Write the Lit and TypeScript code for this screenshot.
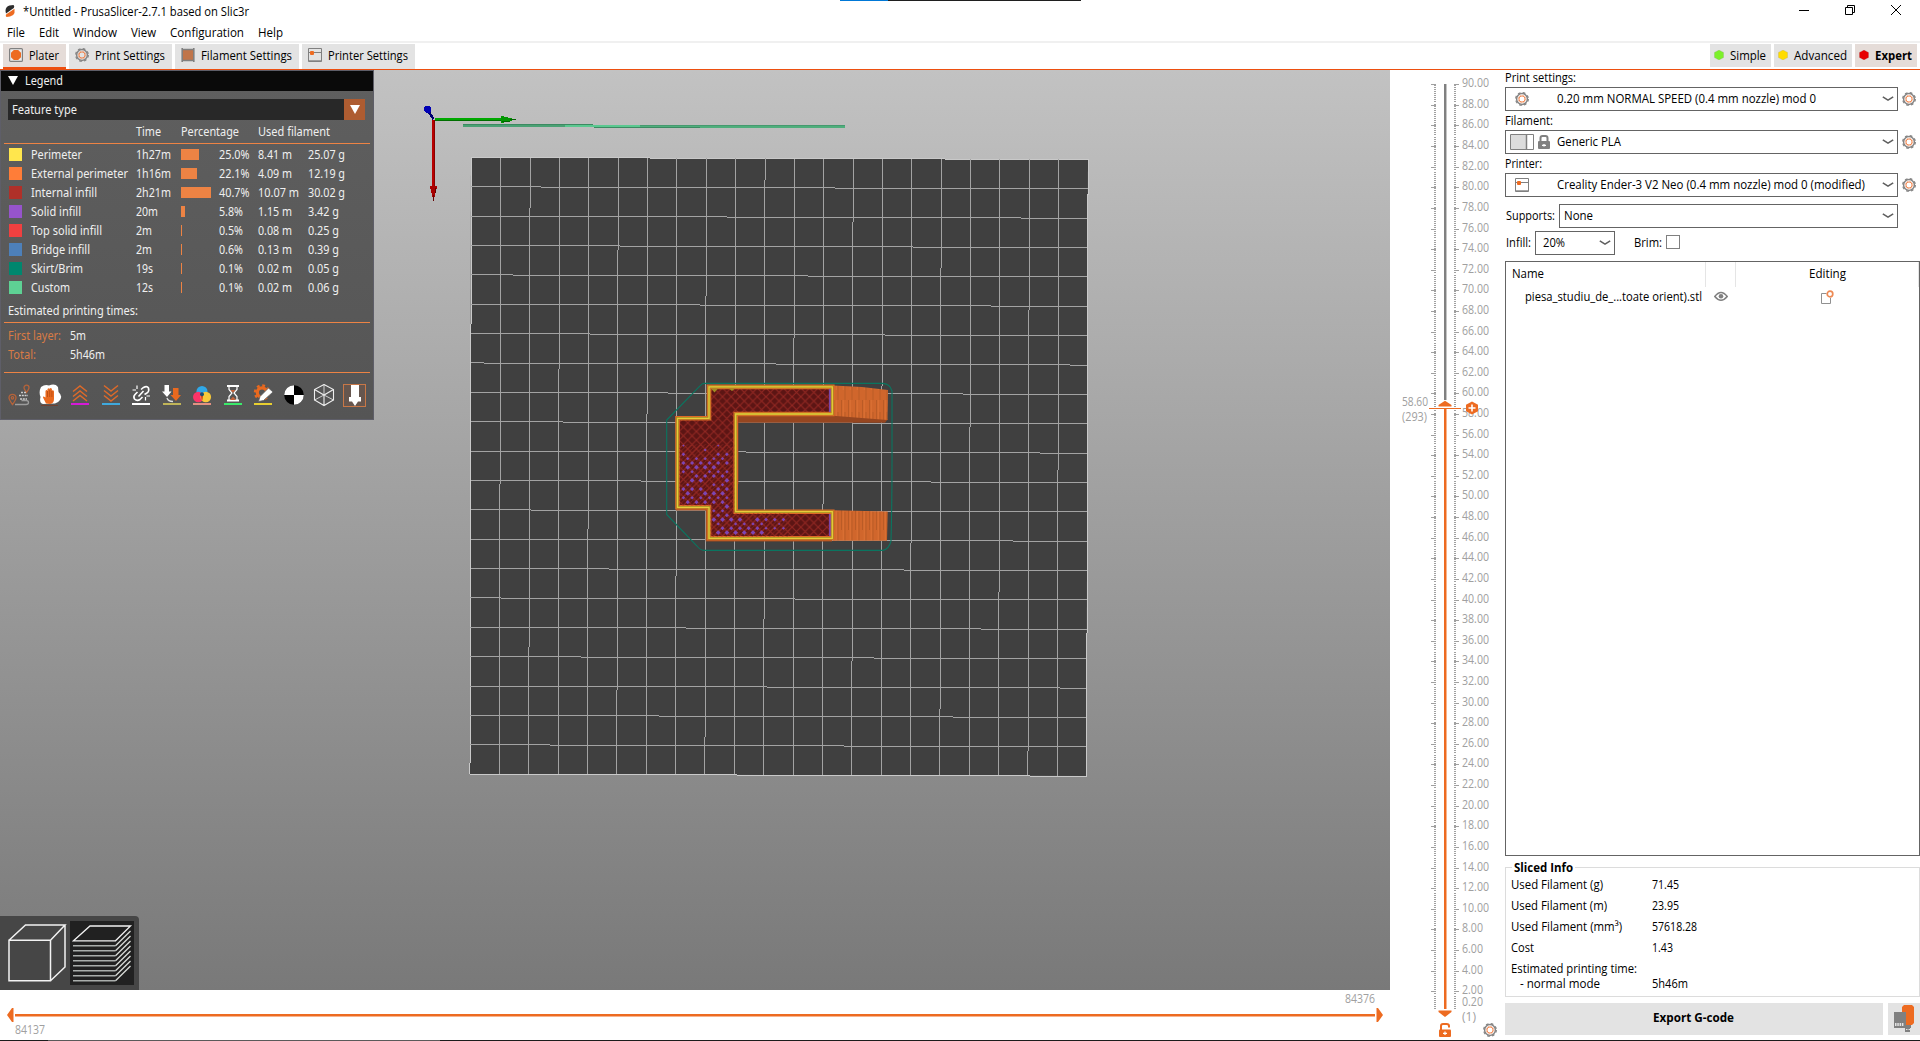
import { LitElement, html, svg, css } from 'lit';
import { customElement } from 'lit/decorators.js';

/* One line of text set to an exact advance width. */
const t = (text: string, w: number, cls = '') => html`<svg class="t ${cls}" width=${w} height="16">
  <text x="0" y="12" textLength=${w} lengthAdjust="spacingAndGlyphs">${text}</text></svg>`;

const textCss = css`
  .t { display: block; flex: none; overflow: visible; fill: #000; font: 12px 'Open Sans', 'Noto Sans', sans-serif; }
  .t.b { font-weight: 700; }
  .t.g { fill: #a0a0a0; }
  .t.l { fill: #efefef; font-family: 'Noto Sans', sans-serif; }
  .t.o { fill: #d97b45; font-family: 'Noto Sans', sans-serif; }
  svg { display: block; flex: none; }
`;

const cogRings = (cx: number, cy: number) => svg`<g fill="none">
  <circle cx=${cx} cy=${cy} r="5.4" stroke="#858585" stroke-width="1.5" />
  <circle cx=${cx} cy=${cy} r="6.3" stroke="#858585" stroke-width="1.3" stroke-dasharray="2.7 2.25" />
  <circle cx=${cx} cy=${cy} r="3.1" stroke="#f0824a" stroke-width="1" />
  <circle cx=${cx} cy=${cy} r="3.8" stroke="#f0824a" stroke-width=".5" stroke-dasharray="1.5 1.49" /></g>`;
const cog = html`<svg width="14" height="14" viewBox="0 0 14 14">${cogRings(7, 7)}</svg>`;
const printer = html`<svg width="14" height="14" viewBox="0 0 14 14">
  <path d="M.5 .5H13.5V13.5H.5ZM.5 4.5H13.5M.5 12.8H13.5" fill="none" stroke="#808080" />
  <rect x="2" y="3" width="4" height="4" rx="1" fill="#ed6b21" /></svg>`;
const plater = html`<svg width="14" height="14" viewBox="0 0 14 14">
  <rect x=".6" y=".6" width="12.8" height="12.8" rx="1" fill="#ececec" stroke="#808080" stroke-width="1.2" />
  <path d="M4.8 2H9.2L12 4.8V9.2L9.2 12H4.8L2 9.2V4.8Z" fill="#ed6b21" /></svg>`;
const spool = html`<svg width="14" height="14" viewBox="0 0 14 14">
  <rect x="2" y="1.5" width="10" height="11" fill="#c0754a" />
  <path d="M1.2 0V14M12.8 0V14M2 1.5H12M2 12.5H12" stroke="#808080" stroke-width="1.6" /></svg>`;
const hex = (c: string) => html`<svg width="10" height="10" viewBox="0 0 10 10">
  <path d="M5 0L9.6 2.4V7.6L5 10L.4 7.6V2.4Z" fill=${c} stroke="#8a8a8a" stroke-opacity=".35" stroke-width=".6" /></svg>`;
const chevron = html`<svg width="12" height="6" viewBox="0 0 12 6"><path d="M.8 .8L6 4.2L11.2 .8" fill="none" stroke="#606060" stroke-width="1.5" /></svg>`;

@customElement('title-bar')
class TitleBar extends LitElement {
  static styles = [textCss, css`
    :host { display: block; height: 43px; background: #fff; position: relative; }
    .title { display: flex; height: 22px; align-items: flex-start; padding: 4px 0 0 5px; box-sizing: border-box; }
    .logo { margin: 1px 8px 0 0; }
    .win { display: flex; margin: 1px 19px 0 auto; gap: 36px; }
    .menu { display: flex; height: 19px; padding: 3px 0 0 7px; gap: 14px; box-sizing: border-box; }
    .rule { height: 2px; background: #f0f0f0; }
    .strip { position: absolute; left: 840px; top: 0; width: 241px; height: 1px; background: linear-gradient(90deg, #0078d7 48px, #1f1f1f 48px); }
  `];
  render() {
    return html`<div class="title">
      <svg class="logo" width="10" height="12" viewBox="0 0 10 12"><path d="M.5 6Q.5 1.500 4.500 .5L8.500 0Q9.800 1 8.800 3L1 8.500Z" fill="#2c2c2c" />
        <path d="M9.500 3.800V8Q8.500 11 5 11.6L1.5 12Q.2 11 1 9.500Z" fill="#ed6b21" /></svg>
      ${t('*Untitled - PrusaSlicer-2.7.1 based on Slic3r', 226)}
      <div class="win">
        <svg width="10" height="12"><path d="M0 5.5H10" stroke="#000" /></svg>
        <svg width="10" height="12"><path d="M.5 2.5H7.5V9.5H.5ZM2.5 2.5V.5H9.5V7.5H7.5" fill="none" stroke="#000" /></svg>
        <svg width="10" height="12"><path d="M0 0L10 10M10 0L0 10" stroke="#000" /></svg>
      </div></div>
      <div class="menu">${t('File', 18)}${t('Edit', 20)}${t('Window', 44)}${t('View', 25)}${t('Configuration', 74)}${t('Help', 25)}</div>
      <div class="rule"></div><div class="strip"></div>`;
  }
}

@customElement('tab-bar')
class TabBar extends LitElement {
  static styles = [textCss, css`
    :host { display: flex; height: 27px; background: #fff; border-bottom: 1px solid #ed4f10; box-sizing: border-box; padding: 1px 3px 0; gap: 3px; }
    .tab { display: flex; height: 25px; background: #e3e3e3; box-sizing: border-box; padding: 4px 7px 0 6px; }
    .tab > svg:first-child { margin-right: 6px; }
    .tab.on { background: #e5dcd8; border-bottom: 2px solid #ed4f10; }
    .mode { display: flex; height: 23px; background: #e3e3e3; box-sizing: border-box; padding: 4px 5px 0 4px; }
    .mode > svg:first-child { margin: 2px 6px 0 0; }
    .mode.on { background: #e5dcd8; }
    .sp { flex: 1; }
  `];
  render() {
    return html`<div class="tab on">${plater}${t('Plater', 30)}</div>
      <div class="tab">${cog}${t('Print Settings', 70)}</div>
      <div class="tab">${spool}${t('Filament Settings', 91)}</div>
      <div class="tab">${printer}${t('Printer Settings', 80)}</div>
      <div class="sp"></div>
      <div class="mode">${hex('#7cf02a')}${t('Simple', 36)}</div>
      <div class="mode">${hex('#ffdc00')}${t('Advanced', 53)}</div>
      <div class="mode on">${hex('#e70000')}${t('Expert', 37, 'b')}</div>`;
  }
}

type Row = [string, string, number, string, number, number, string, string, number];
const rows: Row[] = [
  ['#ffe64d', 'Perimeter', 51, '1h27m', 35, 18, '25.0%', '8.41 m', 25.07],
  ['#ff7d38', 'External perimeter', 97, '1h16m', 35, 16, '22.1%', '4.09 m', 12.19],
  ['#b03029', 'Internal infill', 66, '2h21m', 35, 30, '40.7%', '10.07 m', 30.02],
  ['#9654cc', 'Solid infill', 50, '20m', 22, 4, '5.8%', '1.15 m', 3.42],
  ['#f04040', 'Top solid infill', 71, '2m', 16, 1, '0.5%', '0.08 m', 0.25],
  ['#4d80ba', 'Bridge infill', 59, '2m', 16, 1, '0.6%', '0.13 m', 0.39],
  ['#00876e', 'Skirt/Brim', 52, '19s', 17, 1, '0.1%', '0.02 m', 0.05],
  ['#5ed194', 'Custom', 39, '12s', 17, 1, '0.1%', '0.02 m', 0.06],
];

/* Legend toolbar glyphs, each drawn in a 24 x 24 box. */
const bar = (c: string) => svg`<rect x="3" y="19" width="18" height="2" fill=${c} />`;
const tools = [
  svg`<g fill="none" stroke="#b5633a" stroke-width="1.3"><path d="M5.5 20.5C3 17 2 15.500 2 13.800A3.500 3.500 0 0 1 9 13.800C9 15.500 8 17 5.500 20.500Z" /><circle cx="5.500" cy="13.800" r="1.200" /><path d="M19.500 8.500C17.500 5.500 17 4.700 17 3.700A2.500 2.500 0 0 1 22 3.700C22 4.700 21.500 5.500 19.500 8.500Z" /><path d="M8 20.500H19Q21.500 20.500 21.500 18.500T19 16.500H14.500" stroke="#9c9c9c" /><path d="M14 8.500H20" stroke="#c8c8c8" stroke-dasharray="2 1" /><path d="M12 11.500H21M13 15H20" stroke="#d0d0d0" stroke-width="1.600" stroke-dasharray="2 .8" /></g>`,
  svg`<path d="M3 3Q7 0 11 1.500Q17 -1 20 3L20.500 8Q25 12 22 16Q20 19 17 19.500L5 20Q1 19 2.500 13Q.5 8 3 3Z" fill="#fff" /><path d="M8 19.500L5 13.500Q4.500 11.500 7.500 13.500V7Q8.500 5 9.500 7V5Q10.700 3.500 11.700 5V4.500Q12.900 3.300 13.900 5V6.500Q15.500 5.500 16 7.500V15Q16 19.500 12 20Z" fill="#e9691f" /><path d="M9.500 7V13M11.700 6V13M13.900 7V13" stroke="#a33e0c" stroke-width=".6" /><path d="M3 21.500H20" stroke="#6e4030" />`,
  svg`<path d="M5 7.500L12 2L19 7.500M5 12.500L12 7L19 12.500M5 17L12 11.500L19 17" fill="none" stroke="#dd6a2a" stroke-width="1.500" />${bar('#d61ad6')}`,
  svg`<path d="M5 1.500L12 7L19 1.500M5 6.500L12 12L19 6.500M5 11.500L12 17L19 11.500" fill="none" stroke="#dd6a2a" stroke-width="1.500" />${bar('#3fa9dd')}`,
  svg`<g fill="none" stroke="#fff" stroke-width="1.600"><path d="M12 5.500L14.500 3.500Q18 1.500 19.500 4Q20.500 7 18 9L15.500 10.500" /><path d="M8.500 8L6 10.500Q4 12.500 5.500 15Q8 17.500 11 15.500L13.500 13" /><path d="M9.500 12.500L14.500 7" /><path d="M8 1.500V5M3.500 6H7M16.500 13V16.500M17.500 12H21" stroke-width="1.200" /></g>${bar('#fff')}`,
  svg`<path d="M4.500 1H9V7.500H11.500L7 13L2 7.500H4.500Z" fill="#fff" /><path d="M13 4H18.500V11H21L16 17L10.500 11H13Z" fill="#e9691f" /><path d="M7 14Q8 17.500 13 17.500" fill="none" stroke="#ddd" stroke-width="1.300" />${bar('#c0b458')}`,
  svg`<circle cx="12" cy="7.500" r="5.500" fill="#30a8e8" /><circle cx="8.300" cy="13" r="5.300" fill="#fb3468" /><circle cx="15.800" cy="13" r="5.300" fill="#f7c93a" /><path d="M12 9Q14 12 12 17Q10 12 12 9Z" fill="#d64a1c" /><circle cx="12" cy="10.300" r="2" fill="#1c4f74" />${bar('#e29182')}`,
  svg`<path d="M6 2H18M6 16.500H18" stroke="#fff" stroke-width="2" /><path d="M8 2.500V5.500L11 9L8 12.500V16M16 2.500V5.500L13 9L16 12.500V16" fill="none" stroke="#fff" stroke-width="1.200" /><path d="M9.500 6H14.500L12 8.700ZM9 16L12 12.500L15 16Z" fill="#c4633a" />${bar('#3bea6b')}`,
  svg`<circle cx="11" cy="8.500" r="4.700" fill="none" stroke="#e9691f" stroke-width="3.200" /><circle cx="11" cy="8.500" r="7" fill="none" stroke="#e9691f" stroke-width="2.400" stroke-dasharray="2.800 2.700" /><path d="M7.500 17.500L9 12.500L17.500 4L22 8L12.500 16.500Z" fill="#fff" stroke="#5a5a5a" stroke-width=".8" />${bar('#e8cf30')}`,
  svg`<circle cx="12" cy="11" r="9.800" fill="#000" /><path d="M12 11V1.200A9.800 9.800 0 0 0 2.200 11ZM12 11V20.800A9.800 9.800 0 0 0 21.800 11Z" fill="#fff" />`,
  svg`<g fill="none" stroke="#eee" stroke-width="1.100"><path d="M12 .5L21.500 5.500V16L12 21.500L2.500 16V5.500ZM2.500 5.500L12 11L21.500 5.500M12 11V21.500" /><path d="M12 .5V11L2.500 16M12 11L21.500 16" stroke-width=".8" /></g>`,
  svg`<rect x=".5" y=".5" width="22" height="22" fill="#66564e" stroke="#c87747" /><path d="M8 1H16V13H18V17.500H15L12 22L9 17.500H6V13H8Z" fill="#fff" />`,
];

@customElement('legend-panel')
class LegendPanel extends LitElement {
  static styles = [textCss, css`
    :host { display: block; width: 374px; height: 350px; box-sizing: border-box; border: 1px solid #5e5e68; background: linear-gradient(#5f5f5f, #555); overflow: hidden; }
    .head { display: flex; height: 20px; background: #0a0a0a; padding: 2px 0 0 7px; box-sizing: border-box; }
    .head > svg:first-child { margin: 3px 7px 0 0; }
    .combo { display: flex; justify-content: space-between; height: 21px; margin: 8px 8px 0 7px; background: #282828; }
    .combo .t { margin: 3px 0 0 4px; }
    .drop { display: flex; align-items: center; justify-content: center; width: 21px; background: #ae5c31; }
    .cols { display: grid; grid-template-columns: 45px 77px 1fr; padding: 4px 0 0 135px; height: 23px; box-sizing: border-box; }
    .line { height: 1px; margin: 0 3px; background: #ed8344; }
    .rows { padding-top: 1px; }
    .row { display: grid; grid-template-columns: 22px 105px 45px 38px 39px 50px 1fr; height: 19px; padding: 2px 0 0 8px; box-sizing: border-box; }
    .sw { width: 13px; height: 13px; margin-top: 1px; }
    .bar { height: 11px; margin-top: 2px; background: #ed8344; }
    .est { padding: 6px 0 3px 7px; }
    .times { display: grid; grid-template-columns: 62px 1fr; row-gap: 3px; padding: 5px 0 9px 7px; }
    .tools { display: grid; grid-template-columns: repeat(12, 30.5px); padding: 11px 0 0 6px; }
  `];
  render() {
    return html`<div class="head"><svg width="10" height="9"><path d="M0 0H10L5 9Z" fill="#fff" /></svg>${t('Legend', 38, 'l')}</div>
      <div class="combo">${t('Feature type', 65, 'l')}<span class="drop"><svg width="10" height="9"><path d="M0 0H10L5 9Z" fill="#fff" /></svg></span></div>
      <div class="cols">${t('Time', 25, 'l')}${t('Percentage', 58, 'l')}${t('Used filament', 72, 'l')}</div>
      <div class="line"></div>
      <div class="rows">${rows.map(r => html`<div class="row">
        <div class="sw" style="background:${r[0]}"></div>${t(r[1], r[2], 'l')}${t(r[3], r[4], 'l')}
        <div class="bar" style="width:${r[5]}px"></div>${t(r[6], r[6].length > 4 ? 30.5 : 24, 'l')}
        ${t(r[7], r[7].length > 6 ? 41 : 34, 'l')}${t(`${r[8].toFixed(2)} g`, r[8] >= 10 ? 37 : 31, 'l')}</div>`)}</div>
      <div class="est">${t('Estimated printing times:', 130, 'l')}</div>
      <div class="line"></div>
      <div class="times">${t('First layer:', 53, 'o')}${t('5m', 16, 'l')}${t('Total:', 28, 'o')}${t('5h46m', 35, 'l')}</div>
      <div class="line"></div>
      <div class="tools">${tools.map(g => html`<svg width="24" height="24" viewBox="0 0 24 24">${g}</svg>`)}</div>`;
  }
}

@customElement('bed-view')
class BedView extends LitElement {
  static styles = [textCss, css`
    :host { display: block; position: relative; width: 1390px; height: 920px; background: linear-gradient(#c2c2c2, #797979); }
    .legend { position: absolute; left: 0; top: 0; }
    .toggle { position: absolute; left: 0; bottom: 0; width: 139px; height: 74px; box-sizing: border-box; display: flex; padding: 5px; background: #464646; border-radius: 0 4px 0 0; }
    .on { background: #212121; }
  `];
  bed() {
    const n = 21, out = [];
    for (let i = 0; i <= n; i++) {
      const f = i / n, e = i === 0 || i === n;
      const x = 471.4 + 616.7 * f, y = 157.4 + 616.7 * f;
      const c = e ? '#c9c9c9' : '#a3a3a3';
      out.push(svg`<path d="M${x} ${157.5 + 2 * f}L${x - 1.4} ${774 + 2 * f}M${471.5 - 1.4 * f} ${y}L${1088 - 1.4 * f} ${y + 2.1}" stroke=${c} />`);
    }
    return out;
  }
  /* Solid infill showing through the cells of the sparse infill. */
  purple() {
    const out = [];
    for (let j = 0; j < 21; j++) for (let i = 0; i < 14; i++) {
      const x = 683.4 + i * 8.7 + (j % 2) * 4.35, y = 445.6 + j * 4.35;
      if (x > 731 && (y < 516 || x > 787)) continue;
      if ((y > 503 && x < 713) || y > 534) continue;
      const k = (i * 7 + j * 5) % 9;
      const top = y < 456, band = y > 477 && y < 486;
      if (k > (top ? 2 : band ? 3 : x > 760 ? 5 : 7)) continue;
      const s = (top || x > 765 ? 1.2 : 1.7) + ((i * 3 + j) % 3) * 0.35;
      out.push(svg`<path d="M${x} ${y - s}l${s} ${s}l${-s} ${s}l${-s} ${-s}Z" />`);
    }
    return out;
  }
  render() {
    const body = 'M709 386.900H832.300V414H735.700V511.700H832.300V538.300H709V507.300H677.500V418.300H709Z';
    return html`<svg width="1390" height="920" viewBox="0 70 1390 920">
      <defs>
        <pattern id="fill" width="8.700" height="8.700" patternUnits="userSpaceOnUse" x="679" y="388"><rect width="9" height="9" fill="#5c1514" />
          <path d="M-1 -1L10 10M-1 9.700L9.700 -1" stroke="#922722" stroke-width="1.100" /></pattern>
        <pattern id="dense" width="4.350" height="4.350" patternUnits="userSpaceOnUse" x="679" y="388"><path d="M-1 5.350L5.350 -1" stroke="#982a24" stroke-width=".9" /></pattern>
        <pattern id="ribs" width="7" height="50" patternUnits="userSpaceOnUse"><rect width="7" height="50" fill="#d0662c" /><path d="M1.500 0V30M5 12V50" stroke="#b85a26" stroke-width=".9" /><path d="M3.300 0V40" stroke="#dc7034" stroke-width=".9" /></pattern>
      </defs>
      <path d="M471 157.500L1088 159.500L1086.500 776L470 774Z" fill="#404040" />
      <g shape-rendering="crispEdges" fill="none">${this.bed()}</g>
      <g shape-rendering="crispEdges">
        <path d="M463 124H593V127H463Z" fill="#4aa174" /><path d="M594 125H845V128H594Z" fill="#4fae7c" />
        <path d="M565 125H640V127H565Z" fill="#5bc890" /><path d="M463 124.500H593M594 127.500H700" stroke="#3c8a62" /><path d="M640 125.500H845" stroke="#469a6f" />
        <path d="M435 118H502V121H435Z" fill="#00a800" /><path d="M435 120.500H502" stroke="#006e00" />
        <path d="M501 116H504V117H508V118H512V121H508V122H504V123H501Z" fill="#009600" /><path d="M502 121.500H510M510 119.500H516" stroke="#006400" />
        <path d="M432 120H435V187H432Z" fill="#b80000" /><path d="M434.500 120V187" stroke="#800" />
        <path d="M430 186H437V189H436V193H435V197H432V193H431V189H430Z" fill="#a80000" /><path d="M435.500 188V193M433.500 195V201" stroke="#600" />
        <path d="M433.500 119L429 112" stroke="#000070" stroke-width="2.600" /><path d="M425 106H430L431 108V111L429 113H426L424 110V107Z" fill="#0000b4" />
      </g>
      <path d="M704 383.400H883Q890 384 892 391V462Q892 505 891 541Q889 549 883 550.400H704Q700 550 697 546L666.700 514.500V420L700 386Q702 383.400 704 383.400Z" fill="none" stroke="#0a7560" stroke-width="1.100" />
      <path d="M737 415H833L888 419L885 422.700H737Z" fill="#964620" />
      <path d="M833 385.500L862 387L888 390L887.500 420L833 415.700Z" fill="url(#ribs)" />
      <path d="M833 510.300L887.700 511.500L887 540.700H833Z" fill="url(#ribs)" />
      <path d="M676 509.700H706.500V540.800H832" fill="none" stroke="#9c4a20" stroke-width="1.400" />
      <path d="M737.800 416V484" stroke="#9c4a20" stroke-width="1.200" />
      <path d=${body} fill="url(#fill)" stroke="#e06a26" stroke-width="4.600" />
      <path d="M679 444H735V512H790V537H710V506H679Z" fill="url(#dense)" opacity=".6" />
      <g fill="#7d45b4">${this.purple()}</g>
      <path d=${body} fill="none" stroke="#a08c22" stroke-width="2.600" />
      <path d=${body} fill="none" stroke="#e8cb3a" stroke-width="1.300" />
      <path d="M829.800 389V412M829.800 514V536" stroke="#7a45a8" stroke-width="1.800" />
      <path d="M711 388.500H718L714.500 392.500ZM729 388.500H735L732 391Z" fill="#a08c22" />
    </svg>
    <legend-panel class="legend"></legend-panel>
    <div class="toggle">
      <svg width="65" height="64" viewBox="5 921 65 64"><path d="M9 940.300H50.500V980.700H9ZM9 940.300L25.500 925H65L50.500 940.300M65 925V967L50.500 980.700" fill="none" stroke="#f2f2f2" stroke-width="1.500" /></svg>
      <svg class="on" width="64" height="64" viewBox="70 921 64 64">
        <path d="M73.500 940.800L90 926H130.500L115.500 940.800Z" fill="none" stroke="#f2f2f2" stroke-width="1.300" />
        ${[0, 1, 2, 3, 4, 5, 6, 7].map(i => svg`<path d="M73 ${945.800 + i * 5}H115.500" stroke="#a9adab" stroke-width="1.600" /><path d="M115.500 ${945.800 + i * 5}L130.500 ${931 + i * 5}" stroke="#d9dcd8" stroke-width="1.300" />`)}
      </svg>
    </div>`;
  }
}

@customElement('layer-slider')
class LayerSlider extends LitElement {
  static styles = [textCss, css`:host { display: block; width: 110px; height: 970px; }
    text { font: 12px 'Open Sans', 'Noto Sans', sans-serif; fill: #a0a0a0; }`];
  render() {
    const step = 20.615;
    const labels = Array.from({ length: 45 }, (_, i) => 90 - i * 2);
    const ty = (i: number) => Math.round(84.2 + i * step);
    const num = (s: string, x: number, y: number, w: number) => svg`<text x=${x} y=${y} textLength=${w} lengthAdjust="spacingAndGlyphs">${s}</text>`;
    return html`<svg width="110" height="970" viewBox="1390 70 110 970">
      <g stroke="#a0a0a0" shape-rendering="crispEdges">
        <path d="M1435 85V1010M1455 85V1010" stroke-width="2" stroke-dasharray="1 1.060" />
        ${labels.map((_, i) => svg`<path d="M1431 ${ty(i) + .5}H1436M1454 ${ty(i) + .5}H1459" />`)}
      </g>
      ${labels.map((v, i) => num(v.toFixed(2), 1462, ty(i) + 3, v >= 10 ? 27 : 21))}
      ${num('58.60', 1402, 406, 26)}${num('(293)', 1402, 421, 25)}${num('0.20', 1462, 1006, 21)}${num('(1)', 1462, 1021, 14)}
      <g shape-rendering="crispEdges"><rect x="1444" y="84" width="2" height="316" fill="#808080" /><rect x="1446" y="84" width="1" height="316" fill="#c4c4c4" />
      <rect x="1444" y="409" width="2" height="600" fill="#ed6b21" /><rect x="1446" y="409" width="1" height="600" fill="#f8b48e" /><rect x="1429" y="408" width="32" height="1" fill="#ed6b21" /></g>
      <path d="M1438.500 406.500V405L1445 400.700L1451.500 405V406.500Z" fill="#ed6b21" />
      <path d="M1438.500 1010.500V1012L1445 1017L1451.500 1012V1010.500Z" fill="#ed6b21" />
      <path d="M1472 401.500L1478 404.700V411.300L1472 414.500L1466 411.300V404.700Z" fill="#ed6b21" /><path d="M1472 404.500V411.500M1468.500 408H1475.500" stroke="#fff" stroke-width="1.600" />
      <path d="M1441 1030V1026Q1441 1024 1443 1024H1446.500Q1449 1024 1449 1026V1027.500" fill="none" stroke="#ed6b21" stroke-width="2" />
      <rect x="1439" y="1029.500" width="12" height="7.500" rx="1" fill="#ed6b21" /><path d="M1443 1033.300H1447M1445 1031.500V1035" stroke="#fff" stroke-width="1.200" />
      ${cogRings(1490, 1030)}
    </svg>`;
  }
}

@customElement('move-slider')
class MoveSlider extends LitElement {
  static styles = [textCss, css`
    :host { display: flex; flex-direction: column; width: 1390px; height: 50px; box-sizing: border-box; padding: 1px 7px 0; background: #fff; }
    .hi { align-self: flex-end; margin-right: 8px; }
    .lo { margin-left: 8px; }
  `];
  render() {
    return html`<div class="hi">${t('84376', 30, 'g')}</div>
      <svg width="1376" height="15"><rect x="8" y="7" width="1360" height="2" fill="#ed6b21" /><rect x="8" y="9" width="1360" height="1" fill="#f8b48e" />
        <path d="M6.500 1V15H5L0 8L5 1ZM1369.500 1V15H1371L1376 8L1371 1Z" fill="#ed6b21" /></svg>
      <div class="lo">${t('84137', 30, 'g')}</div>`;
  }
}

@customElement('side-panel')
class SidePanel extends LitElement {
  static styles = [textCss, css`
    :host { display: flex; flex-direction: column; width: 420px; height: 970px; box-sizing: border-box; padding-left: 5px; background: #fff; }
    .lab { height: 17px; box-sizing: border-box; }
    .line { display: flex; align-items: center; height: 24px; margin-bottom: 2px; gap: 4px; }
    .combo { display: flex; align-items: center; width: 393px; height: 24px; box-sizing: border-box; border: 1px solid #646464; padding: 0 3px 0 4px; }
    .pre { display: flex; align-items: center; width: 47px; }
    .pre.in { padding-left: 5px; width: 42px; }
    .pre svg + svg { margin-left: 4px; }
    .combo > svg:last-child { margin-left: auto; }
    .combo > .t { margin-top: -1px; }
    .sup { width: 339px; } .inf { width: 80px; padding-left: 7px; }
    .opt { display: flex; align-items: center; height: 24px; padding-left: 1px; margin-bottom: 3px; gap: 4px; }
    .first { margin-top: 5px; }
    .gap { width: 11px; }
    .box { width: 14px; height: 14px; box-sizing: border-box; border: 1px solid #808080; margin-top: -2px; }
    .list { height: 595px; margin-top: 3px; border: 1px solid #646464; box-sizing: border-box; }
    .cells { display: grid; grid-template-columns: 200px 30px 1fr; height: 25px; }
    .cells > div { display: flex; box-sizing: border-box; border-right: 1px solid #e5e5e5; padding: 4px 0 0 6px; }
    .cells > .mid { justify-content: center; padding-left: 0; }
    .item > div { border: 0; padding-top: 2px; }
    .item > div:first-child { padding-left: 19px; }
    .item > .mid { padding-right: 1px; }
    .info { position: relative; height: 130px; margin-top: 11px; box-sizing: border-box; border: 1px solid #dcdcdc; padding: 9px 0 0 5px; }
    .cap { position: absolute; left: 6px; top: -8px; background: #fff; padding: 0 2px; }
    .kv { display: grid; grid-template-columns: 141px 1fr; height: 21px; }
    .kv.s { height: 15px; }
    .ind { padding-left: 9px; }
    .foot { display: flex; gap: 5px; margin-top: 6px; }
    .btn { display: flex; justify-content: center; width: 378px; height: 32px; box-sizing: border-box; padding: 7px 2px 0 0; background: #e3e3e3; }
    .usb { width: 32px; padding: 2px 0 0; }
  `];
  render() {
    const lock = html`<svg width="12" height="14"><path d="M2.500 7V3Q2.500 1 4.500 1H7.500Q9.500 1 9.500 3V7" fill="none" stroke="#808080" stroke-width="2" /><rect y="6" width="12" height="8" rx="1" fill="#808080" /><path d="M4 10.300H8M6 9V11.500" stroke="#fff" stroke-width="1.300" /></svg>`;
    const sw = html`<svg width="24" height="16"><path d="M.5 .5H23.500V15.500H.5Z" fill="#fff" stroke="#808080" /><rect x="1" y="1" width="15" height="14" fill="#dcdcdc" /><path d="M16.500 0V16" stroke="#808080" stroke-width="1.500" /></svg>`;
    const kv = (k: string, kw: number, v: string, vw: number) => html`<div class="kv">${t(k, kw)}${t(v, vw)}</div>`;
    return html`<div class="lab">${t('Print settings:', 71)}</div>
      <div class="line"><div class="combo"><span class="pre in">${cog}</span>${t('0.20 mm NORMAL SPEED (0.4 mm nozzle) mod 0', 259)}${chevron}</div>${cog}</div>
      <div class="lab">${t('Filament:', 48)}</div>
      <div class="line"><div class="combo"><span class="pre">${sw}${lock}</span>${t('Generic PLA', 64)}${chevron}</div>${cog}</div>
      <div class="lab">${t('Printer:', 37)}</div>
      <div class="line"><div class="combo"><span class="pre in">${printer}</span>${t('Creality Ender-3 V2 Neo (0.4 mm nozzle) mod 0 (modified)', 308)}${chevron}</div>${cog}</div>
      <div class="opt first">${t('Supports:', 49)}<div class="combo sup">${t('None', 29)}${chevron}</div></div>
      <div class="opt">${t('Infill:', 25)}<div class="combo inf">${t('20%', 22)}${chevron}</div><span class="gap"></span>${t('Brim:', 28)}<span class="box"></span></div>
      <div class="list">
        <div class="cells"><div>${t('Name', 32)}</div><div></div><div class="mid">${t('Editing', 37)}</div></div>
        <div class="cells item"><div>${t('piesa_studiu_de_...toate orient).stl', 177)}</div>
          <div class="mid"><svg width="14" height="14"><path d="M.8 7.500Q7 -.5 13.200 7.500Q7 15 .8 7.500Z" fill="none" stroke="#808080" stroke-width="1.600" /><circle cx="7" cy="7.300" r="2.300" fill="#808080" /></svg></div>
          <div class="mid"><svg width="14" height="16"><path d="M6.500 4.500H1.500V14.500H10.500V9" fill="none" stroke="#909090" /><circle cx="10" cy="5" r="2.800" fill="none" stroke="#ed8a55" stroke-width="1.700" /></svg></div></div>
      </div>
      <div class="info"><div class="cap">${t('Sliced Info', 59, 'b')}</div>
        ${kv('Used Filament (g)', 92, '71.45', 27)}${kv('Used Filament (m)', 96, '23.95', 27)}${kv('Used Filament (mm³)', 111, '57618.28', 45)}${kv('Cost', 23, '1.43', 21)}
        <div class="kv s">${t('Estimated printing time:', 126)}</div>
        <div class="kv"><div class="ind">${t('- normal mode', 80)}</div>${t('5h46m', 36)}</div>
      </div>
      <div class="foot"><div class="btn">${t('Export G-code', 81, 'b')}</div>
        <div class="btn usb"><svg width="22" height="28" viewBox="0 0 22 28"><path d="M11 0H19L21 2V18L19 20H9V2Z" fill="#ed6b21" /><rect x="1" y="7" width="12" height="16" fill="#808080" /><path d="M2 19.500H11" stroke="#e3e3e3" stroke-width="3" stroke-dasharray="1.500 .8" /><path d="M11 20H18V23H11ZM12 23H17V27H12Z" fill="#808080" /><path d="M13 24.500H14.500M15.500 24.500H17" stroke="#e3e3e3" /></svg></div></div>`;
  }
}

@customElement('app-root')
class AppRoot extends LitElement {
  static styles = css`
    :host { display: block; width: 1920px; height: 1041px; background: #fff; overflow: hidden; }
    .main { display: flex; height: 970px; }
    .edge { height: 1px; background: linear-gradient(90deg, #1c1c1c 48px, #5a5a5a 48px, #5a5a5a 440px, #1c1c1c 440px); }
  `;
  render() {
    return html`<title-bar></title-bar><tab-bar></tab-bar>
      <div class="main"><div><bed-view></bed-view><move-slider></move-slider></div><layer-slider></layer-slider><side-panel></side-panel></div>
      <div class="edge"></div>`;
  }
}
